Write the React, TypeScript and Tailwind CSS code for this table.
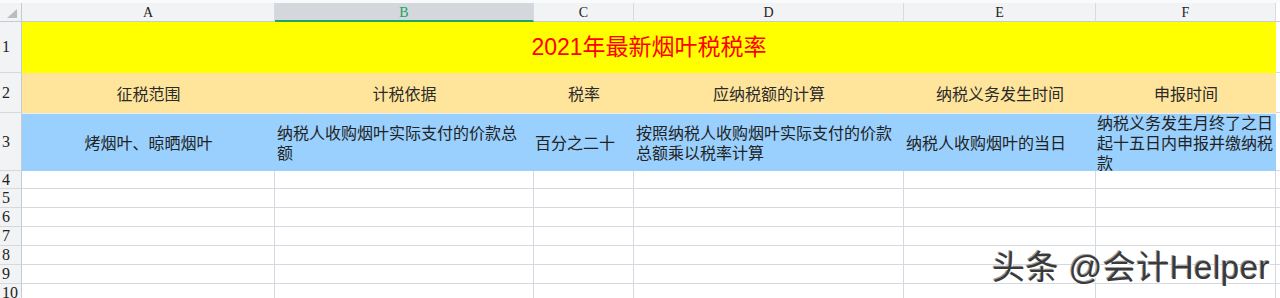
const cjk = "font-['Liberation_Sans','Noto_Sans_CJK_SC',sans-serif]";

function RowHead({ n, h }: { n: number; h: string }) {
    return (
        <div className={`${h} w-[22px] shrink-0 bg-[#f2f3f5] border-r border-b border-r-[#c6cad2] border-b-[#d4d8e0] flex items-center pl-[2px] font-['Liberation_Serif',serif] text-[16px] text-[#222]`}>
            {n}
        </div>
    );
}

function EmptyRow({ n, h }: { n: number; h: string }) {
    return (
        <div className="flex">
            <RowHead n={n} h={h} />
            <div className={`${h} w-[253px] shrink-0 border-r border-b border-[#d4d8e0]`} />
            <div className={`${h} w-[259px] shrink-0 border-r border-b border-[#d4d8e0]`} />
            <div className={`${h} w-[100px] shrink-0 border-r border-b border-[#d4d8e0]`} />
            <div className={`${h} w-[270px] shrink-0 border-r border-b border-[#d4d8e0]`} />
            <div className={`${h} w-[192px] shrink-0 border-r border-b border-[#d4d8e0]`} />
            <div className={`${h} w-[180px] shrink-0 border-r border-b border-[#d4d8e0]`} />
            <div className={`${h} flex-1 border-b border-[#d4d8e0]`} />
        </div>
    );
}

export default function App() {
    return (
        <div className={`relative w-[1280px] h-[298px] overflow-hidden bg-white ${cjk}`}>

            {/* column letters */}
            <div className="flex h-[22px] bg-[#f9fafb] pt-[3px] font-['Liberation_Serif',serif] text-[14px] text-[#222]">
                <div className="w-[22px] shrink-0 bg-[#f2f3f5] border-r border-b border-[#c6cad2] flex items-end justify-end pr-[4px] pb-[3px]">
                    <div className="w-0 h-0 border-l-[10px] border-l-transparent border-b-[9px] border-b-[#b9bcc2]" />
                </div>
                <div className="w-[253px] shrink-0 bg-[#f2f3f5] border-r border-b border-r-[#d7dae0] border-b-[#c6cad2] flex items-center justify-center">A</div>
                <div className="w-[259px] shrink-0 bg-[#d4d7dc] border-r border-b-2 border-r-[#d7dae0] border-b-[#21a366] flex items-center justify-center text-[#21a366] pt-[1px]">B</div>
                <div className="w-[100px] shrink-0 bg-[#f2f3f5] border-r border-b border-r-[#d7dae0] border-b-[#c6cad2] flex items-center justify-center">C</div>
                <div className="w-[270px] shrink-0 bg-[#f2f3f5] border-r border-b border-r-[#d7dae0] border-b-[#c6cad2] flex items-center justify-center">D</div>
                <div className="w-[192px] shrink-0 bg-[#f2f3f5] border-r border-b border-r-[#d7dae0] border-b-[#c6cad2] flex items-center justify-center">E</div>
                <div className="w-[180px] shrink-0 bg-[#f2f3f5] border-r border-b border-r-[#d7dae0] border-b-[#c6cad2] flex items-center justify-center">F</div>
                <div className="flex-1 bg-white border-b border-[#c6cad2]" />
            </div>

            {/* row 1 - title */}
            <div className="flex">
                <RowHead n={1} h="h-[51px]" />
                <div className="h-[51px] w-[1254px] shrink-0 bg-[#ffff00] flex items-center justify-center text-[23px] text-[#ff0000]">
                    2021年最新烟叶税税率
                </div>
                <div className="h-[51px] flex-1 border-b border-[#d4d8e0]" />
            </div>

            {/* row 2 - headings */}
            <div className="flex text-[16px] text-[#2a2a2a]">
                <RowHead n={2} h="h-[40px]" />
                <div className="h-[40px] w-[1254px] shrink-0 bg-[#ffe59c] flex pt-[4px]">
                    <div className="w-[253px] flex items-center justify-center">征税范围</div>
                    <div className="w-[259px] flex items-center justify-center">计税依据</div>
                    <div className="w-[100px] flex items-center justify-center">税率</div>
                    <div className="w-[270px] flex items-center justify-center">应纳税额的计算</div>
                    <div className="w-[192px] flex items-center justify-center">纳税义务发生时间</div>
                    <div className="w-[180px] flex items-center justify-center">申报时间</div>
                </div>
                <div className="h-[40px] flex-1 border-b border-[#d4d8e0]" />
            </div>

            {/* row 3 - values */}
            <div className="flex text-[16px] leading-[20px] text-[#222]">
                <RowHead n={3} h="h-[58px]" />
                <div className="h-[58px] w-[1254px] shrink-0 bg-[#99d0fe] flex border-t border-[#e8eef5]">
                    <div className="w-[253px] flex items-center justify-center pt-[2px]">烤烟叶、晾晒烟叶</div>
                    <div className="w-[259px] flex flex-col justify-center pl-[2px] pt-[2px]">
                        <span>纳税人收购烟叶实际支付的价款总</span>
                        <span>额</span>
                    </div>
                    <div className="w-[100px] flex items-center pl-[1px] pt-[2px]">百分之二十</div>
                    <div className="w-[270px] flex flex-col justify-center pl-[2px] pt-[2px]">
                        <span>按照纳税人收购烟叶实际支付的价款</span>
                        <span>总额乘以税率计算</span>
                    </div>
                    <div className="w-[192px] flex items-center pl-[2px] pt-[2px]">纳税人收购烟叶的当日</div>
                    <div className="w-[180px] flex flex-col justify-center pl-[1px] pt-[2px]">
                        <span>纳税义务发生月终了之日</span>
                        <span>起十五日内申报并缴纳税</span>
                        <span>款</span>
                    </div>
                </div>
                <div className="h-[58px] flex-1 border-b border-[#d4d8e0]" />
            </div>

            <EmptyRow n={4} h="h-[18px]" />
            <EmptyRow n={5} h="h-[19px]" />
            <EmptyRow n={6} h="h-[19px]" />
            <EmptyRow n={7} h="h-[19px]" />
            <EmptyRow n={8} h="h-[19px]" />
            <EmptyRow n={9} h="h-[19px]" />
            <EmptyRow n={10} h="h-[19px]" />

            {/* watermark */}
            <div className="absolute right-[10px] top-[251px] text-[33px] leading-none tracking-[0.5px] text-[#3a3a3a] [text-shadow:1px_1px_0_#ffffff,-1px_-1px_0_#a0a0a0] font-['Liberation_Sans','Noto_Sans_CJK_SC',sans-serif]">
                头条 @会计Helper
            </div>
        </div>
    );
}
